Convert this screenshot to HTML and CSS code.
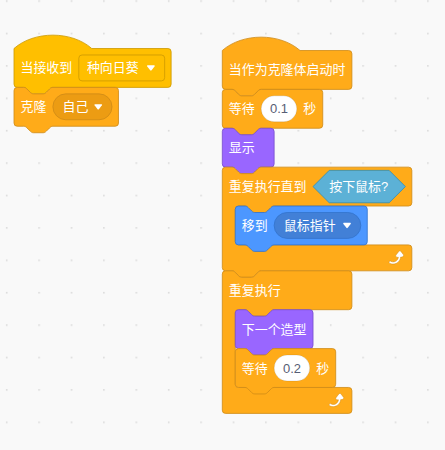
FILE: index.html
```html
<!DOCTYPE html>
<html lang="zh-CN">
<head>
<meta charset="utf-8">
<title>Scratch 脚本</title>
<link rel="stylesheet" href="styles.css">
</head>
<body>
<svg class="workspace" width="445" height="450" viewBox="0 0 445 450" xmlns="http://www.w3.org/2000/svg">
  <defs>
    <pattern id="grid" width="32.4" height="32.4" x="5.9" y="0.3" patternUnits="userSpaceOnUse">
      <rect class="grid-dot" width="1.6" height="1.6"/>
    </pattern>
    <!-- dropdown caret, about 10 x 7 -->
    <path id="caret" d="M1.2,0.3 H8.8 Q10.4,0.3 9.5,1.6 L5.8,6.4 Q5,7.3 4.2,6.4 L0.5,1.6 Q-0.4,0.3 1.2,0.3 Z"/>
    <!-- loop arrow on C blocks -->
    <path id="loop" d="M23.3,11 c-0.3,0.6 -0.9,1 -1.5,1 h-1.6 c-0.1,1.3 -0.5,2.5 -1.1,3.6 c-0.9,1.7 -2.3,3.2 -4.1,4.1 c-1.7,0.9 -3.6,1.2 -5.5,0.9 c-1,-0.2 -2,-0.5 -2.9,-1 c-0.7,-0.4 -1,-1.2 -0.6,-1.9 c0.4,-0.7 1.2,-1 1.9,-0.6 c0.7,0.4 1.4,0.6 2.2,0.8 c1.3,0.2 2.6,0 3.8,-0.6 c1.2,-0.6 2.2,-1.6 2.8,-2.8 c0.3,-0.7 0.6,-1.4 0.7,-2.2 h-1.6 c-0.9,0 -1.7,-0.8 -1.7,-1.7 c0,-0.4 0.1,-0.7 0.3,-1 l3.5,-4.6 c0.6,-0.7 1.6,-0.9 2.3,-0.3 c0.1,0.1 0.2,0.2 0.3,0.3 l3.5,4.6 C23.6,10.2 23.5,10.6 23.3,11 Z"/>
  </defs>

  <rect class="canvas" width="445" height="450"/>
  <rect width="445" height="450" fill="url(#grid)"/>

  <!-- stack 1: when I receive / create clone -->
  <g transform="translate(14 48.5) scale(0.81)">
    <g class="events">
      <path class="shape" d="M0,0 c25,-22 71,-22 96,0 H190 a4,4 0 0,1 4,4 V44 a4,4 0 0,1 -4,4 H48 c-2,0 -3,1 -4,2 l-4,4 c-1,1 -2,2 -4,2 h-12 c-2,0 -3,-1 -4,-2 l-4,-4 c-1,-1 -2,-2 -4,-2 H4 a4,4 0 0,1 -4,-4 Z"/>
      <text class="label" x="8" y="24">当接收到</text>
      <rect class="menu-box" x="80" y="8" width="106" height="32" rx="4"/>
      <text class="label" x="90" y="24">种向日葵</text>
      <use href="#caret" class="caret" x="164" y="20.5"/>
    </g>
    <g class="control" transform="translate(0 48)">
      <path class="shape" d="M0,4 A4,4 0 0,1 4,0 H12 c2,0 3,1 4,2 l4,4 c1,1 2,2 4,2 h12 c2,0 3,-1 4,-2 l4,-4 c1,-1 2,-2 4,-2 H125 a4,4 0 0,1 4,4 V44 a4,4 0 0,1 -4,4 H48 c-2,0 -3,1 -4,2 l-4,4 c-1,1 -2,2 -4,2 h-12 c-2,0 -3,-1 -4,-2 l-4,-4 c-1,-1 -2,-2 -4,-2 H4 a4,4 0 0,1 -4,-4 Z"/>
      <text class="label" x="8" y="24">克隆</text>
      <rect class="menu-pill" x="48" y="8" width="73" height="32" rx="16"/>
      <text class="label" x="60" y="24">自己</text>
      <use href="#caret" class="caret" x="99" y="20.5"/>
    </g>
  </g>

  <!-- stack 2: when I start as a clone -->
  <g transform="translate(222.3 50.5) scale(0.81)">
    <g class="control">
      <path class="shape" d="M0,0 c25,-22 71,-22 96,0 H156 a4,4 0 0,1 4,4 V44 a4,4 0 0,1 -4,4 H48 c-2,0 -3,1 -4,2 l-4,4 c-1,1 -2,2 -4,2 h-12 c-2,0 -3,-1 -4,-2 l-4,-4 c-1,-1 -2,-2 -4,-2 H4 a4,4 0 0,1 -4,-4 Z"/>
      <text class="label" x="8" y="24">当作为克隆体启动时</text>
    </g>

    <g class="control" transform="translate(0 48)">
      <path class="shape" d="M0,4 A4,4 0 0,1 4,0 H12 c2,0 3,1 4,2 l4,4 c1,1 2,2 4,2 h12 c2,0 3,-1 4,-2 l4,-4 c1,-1 2,-2 4,-2 H120 a4,4 0 0,1 4,4 V44 a4,4 0 0,1 -4,4 H48 c-2,0 -3,1 -4,2 l-4,4 c-1,1 -2,2 -4,2 h-12 c-2,0 -3,-1 -4,-2 l-4,-4 c-1,-1 -2,-2 -4,-2 H4 a4,4 0 0,1 -4,-4 Z"/>
      <text class="label" x="8" y="24">等待</text>
      <rect class="num-pill" x="48" y="8" width="44" height="32" rx="16"/>
      <text class="num" x="70" y="24">0.1</text>
      <text class="label" x="100" y="24">秒</text>
    </g>

    <g class="looks" transform="translate(0 96)">
      <path class="shape" d="M0,4 A4,4 0 0,1 4,0 H12 c2,0 3,1 4,2 l4,4 c1,1 2,2 4,2 h12 c2,0 3,-1 4,-2 l4,-4 c1,-1 2,-2 4,-2 H60 a4,4 0 0,1 4,4 V44 a4,4 0 0,1 -4,4 H48 c-2,0 -3,1 -4,2 l-4,4 c-1,1 -2,2 -4,2 h-12 c-2,0 -3,-1 -4,-2 l-4,-4 c-1,-1 -2,-2 -4,-2 H4 a4,4 0 0,1 -4,-4 Z"/>
      <text class="label" x="8" y="24">显示</text>
    </g>

    <!-- repeat until <mouse down?> -->
    <g class="control" transform="translate(0 144)">
      <path class="shape" d="M0,4 A4,4 0 0,1 4,0 H12 c2,0 3,1 4,2 l4,4 c1,1 2,2 4,2 h12 c2,0 3,-1 4,-2 l4,-4 c1,-1 2,-2 4,-2 H230 a4,4 0 0,1 4,4 V44 a4,4 0 0,1 -4,4 H64 c-2,0 -3,1 -4,2 l-4,4 c-1,1 -2,2 -4,2 h-12 c-2,0 -3,-1 -4,-2 l-4,-4 c-1,-1 -2,-2 -4,-2 H20 a4,4 0 0,0 -4,4 V92 a4,4 0 0,0 4,4 H230 a4,4 0 0,1 4,4 V124 a4,4 0 0,1 -4,4 H48 c-2,0 -3,1 -4,2 l-4,4 c-1,1 -2,2 -4,2 h-12 c-2,0 -3,-1 -4,-2 l-4,-4 c-1,-1 -2,-2 -4,-2 H4 a4,4 0 0,1 -4,-4 Z"/>
      <text class="label" x="8" y="24">重复执行直到</text>
      <g class="sensing">
        <path class="shape" d="M132,4 H206 L226,24 L206,44 H132 L112,24 Z"/>
        <text class="label" x="132" y="24">按下鼠标?</text>
      </g>
      <use href="#loop" class="loop" x="200" y="99"/>
    </g>

    <g class="motion" transform="translate(16 192)">
      <path class="shape" d="M0,4 A4,4 0 0,1 4,0 H12 c2,0 3,1 4,2 l4,4 c1,1 2,2 4,2 h12 c2,0 3,-1 4,-2 l4,-4 c1,-1 2,-2 4,-2 H159 a4,4 0 0,1 4,4 V44 a4,4 0 0,1 -4,4 H48 c-2,0 -3,1 -4,2 l-4,4 c-1,1 -2,2 -4,2 h-12 c-2,0 -3,-1 -4,-2 l-4,-4 c-1,-1 -2,-2 -4,-2 H4 a4,4 0 0,1 -4,-4 Z"/>
      <text class="label" x="8" y="24">移到</text>
      <rect class="menu-pill" x="48" y="8" width="107" height="32" rx="16"/>
      <text class="label" x="60" y="24">鼠标指针</text>
      <use href="#caret" class="caret" x="133" y="20.5"/>
    </g>

    <!-- forever -->
    <g class="control" transform="translate(0 272)">
      <path class="shape" d="M0,4 A4,4 0 0,1 4,0 H12 c2,0 3,1 4,2 l4,4 c1,1 2,2 4,2 h12 c2,0 3,-1 4,-2 l4,-4 c1,-1 2,-2 4,-2 H156 a4,4 0 0,1 4,4 V44 a4,4 0 0,1 -4,4 H64 c-2,0 -3,1 -4,2 l-4,4 c-1,1 -2,2 -4,2 h-12 c-2,0 -3,-1 -4,-2 l-4,-4 c-1,-1 -2,-2 -4,-2 H20 a4,4 0 0,0 -4,4 V140 a4,4 0 0,0 4,4 H156 a4,4 0 0,1 4,4 V172 a4,4 0 0,1 -4,4 H4 a4,4 0 0,1 -4,-4 Z"/>
      <text class="label" x="8" y="24">重复执行</text>
      <use href="#loop" class="loop" x="126" y="147"/>
    </g>

    <g class="looks" transform="translate(16 320)">
      <path class="shape" d="M0,4 A4,4 0 0,1 4,0 H12 c2,0 3,1 4,2 l4,4 c1,1 2,2 4,2 h12 c2,0 3,-1 4,-2 l4,-4 c1,-1 2,-2 4,-2 H92 a4,4 0 0,1 4,4 V44 a4,4 0 0,1 -4,4 H48 c-2,0 -3,1 -4,2 l-4,4 c-1,1 -2,2 -4,2 h-12 c-2,0 -3,-1 -4,-2 l-4,-4 c-1,-1 -2,-2 -4,-2 H4 a4,4 0 0,1 -4,-4 Z"/>
      <text class="label" x="8" y="24">下一个造型</text>
    </g>

    <g class="control" transform="translate(16 368)">
      <path class="shape" d="M0,4 A4,4 0 0,1 4,0 H12 c2,0 3,1 4,2 l4,4 c1,1 2,2 4,2 h12 c2,0 3,-1 4,-2 l4,-4 c1,-1 2,-2 4,-2 H120 a4,4 0 0,1 4,4 V44 a4,4 0 0,1 -4,4 H48 c-2,0 -3,1 -4,2 l-4,4 c-1,1 -2,2 -4,2 h-12 c-2,0 -3,-1 -4,-2 l-4,-4 c-1,-1 -2,-2 -4,-2 H4 a4,4 0 0,1 -4,-4 Z"/>
      <text class="label" x="8" y="24">等待</text>
      <rect class="num-pill" x="48" y="8" width="44" height="32" rx="16"/>
      <text class="num" x="70" y="24">0.2</text>
      <text class="label" x="100" y="24">秒</text>
    </g>
  </g>
</svg>
</body>
</html>
```

FILE: styles.css
```css
html, body {
  margin: 0;
  padding: 0;
  background: #f9f9f9;
}

.workspace {
  display: block;
}

.canvas {
  fill: #f9f9f9;
}

.grid-dot {
  fill: #dadada;
}

/* block text */
.label {
  font-family: "Liberation Sans", "Noto Sans CJK SC", sans-serif;
  font-size: 16px;
  fill: #ffffff;
  dominant-baseline: central;
}

.num {
  font-family: "Liberation Sans", "Noto Sans CJK SC", sans-serif;
  font-size: 16px;
  fill: #575e75;
  text-anchor: middle;
  dominant-baseline: central;
}

.shape {
  stroke-width: 1;
}

.num-pill {
  fill: #ffffff;
  stroke: rgba(0, 0, 0, 0.12);
  stroke-width: 1;
}

.caret {
  fill: #ffffff;
}

.loop {
  fill: #ffffff;
  stroke: #cf8b17;
  stroke-width: 0.6;
}

/* category colours */
.events .shape { fill: #ffbf00; stroke: #cc9900; }
.events .menu-box { fill: #ffbf00; stroke: #cc9900; stroke-width: 1; }

.control .shape { fill: #ffab19; stroke: #cf8b17; }
.control .menu-pill { fill: #ec9c13; stroke: #cf8b17; stroke-width: 1; }

.looks .shape { fill: #9966ff; stroke: #774dcb; }

.motion .shape { fill: #4c97ff; stroke: #3373cc; }
.motion .menu-pill { fill: #4280d7; stroke: #3373cc; stroke-width: 1; }

.control .sensing .shape { fill: #5cb1d6; stroke: #2e8eb8; }
```
